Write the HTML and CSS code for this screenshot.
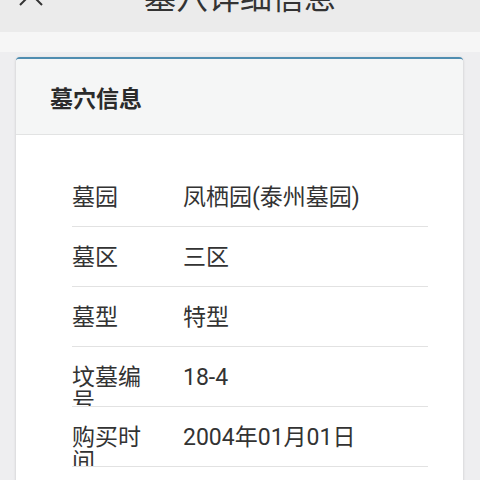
FILE: index.html
```html
<!DOCTYPE html>
<html lang="zh">
<head>
<meta charset="utf-8">
<link rel="stylesheet" href="styles.css">
</head>
<body>
<header class="topbar">
  <div class="back">
    <svg width="24" height="12" viewBox="0 0 24 12"><path d="M1 -17 L23 5 M23 -17 L1 5" stroke="#333" stroke-width="2" fill="none"/></svg>
  </div>
  <div class="title">墓穴详细信息</div>
  <div class="spacer"></div>
</header>
<div class="band"></div>
<main class="page">
  <section class="card">
    <div class="card-head">墓穴信息</div>
    <div class="card-body">
      <div class="row"><div class="label">墓园</div><div class="value">凤栖园(泰州墓园)</div></div>
      <div class="row"><div class="label">墓区</div><div class="value">三区</div></div>
      <div class="row"><div class="label">墓型</div><div class="value">特型</div></div>
      <div class="row"><div class="label">坟墓编号</div><div class="value">18-4</div></div>
      <div class="row"><div class="label">购买时间</div><div class="value">2004年01月01日</div></div>
      <div class="row"><div class="label">有效期</div><div class="value">2024年01月01日</div></div>
    </div>
  </section>
</main>
</body>
</html>
```
FILE: styles.css
```css
html, body {
  margin: 0;
  padding: 0;
  height: 100%;
  overflow: hidden;
}
body {
  background: #eeeef0;
  font-family: Roboto, "Noto Sans CJK SC", sans-serif;
  color: #333;
}
.topbar {
  height: 32px;
  background: #ebebeb;
  display: grid;
  grid-template-columns: 62px 1fr 62px;
  overflow: hidden;
}
.back {
  padding-left: 19px;
}
.back svg {
  display: block;
}
.title {
  font-family: "Noto Sans CJK SC", sans-serif;
  font-size: 32px;
  line-height: 32px;
  margin-top: -21px;
  text-align: center;
  color: #333;
}
.band {
  height: 20px;
  background: #f6f6f6;
}
.page {
  padding: 5px 17px 0 16px;
}
.card {
  background: #fff;
  border-top: 2px solid #4f8db0;
  border-radius: 4px 4px 0 0;
  box-shadow: 0 1px 3px rgba(0, 0, 0, 0.18);
  min-height: 500px;
}
.card-head {
  height: 76px;
  box-sizing: border-box;
  background: #f5f6f6;
  border-bottom: 1px solid #e2e3e3;
  display: flex;
  align-items: center;
  padding-left: 34px;
  font-family: "Noto Sans CJK SC", sans-serif;
  font-weight: 700;
  font-size: 23px;
  color: #2b2b2b;
  border-radius: 3px 3px 0 0;
}
.card-body {
  padding: 32px 35px 0 56px;
}
.row {
  display: flex;
  align-items: baseline;
  height: 60px;
  box-sizing: border-box;
  padding-top: 16px;
  border-bottom: 1px solid #e2e2e2;
  overflow: hidden;
  font-size: 23px;
  line-height: 24px;
  color: #333;
}
.label {
  flex: 0 0 80px;
  margin-right: 31px;
  font-family: "Noto Sans CJK SC", sans-serif;
}
.value {
  flex: 1;
}
```
